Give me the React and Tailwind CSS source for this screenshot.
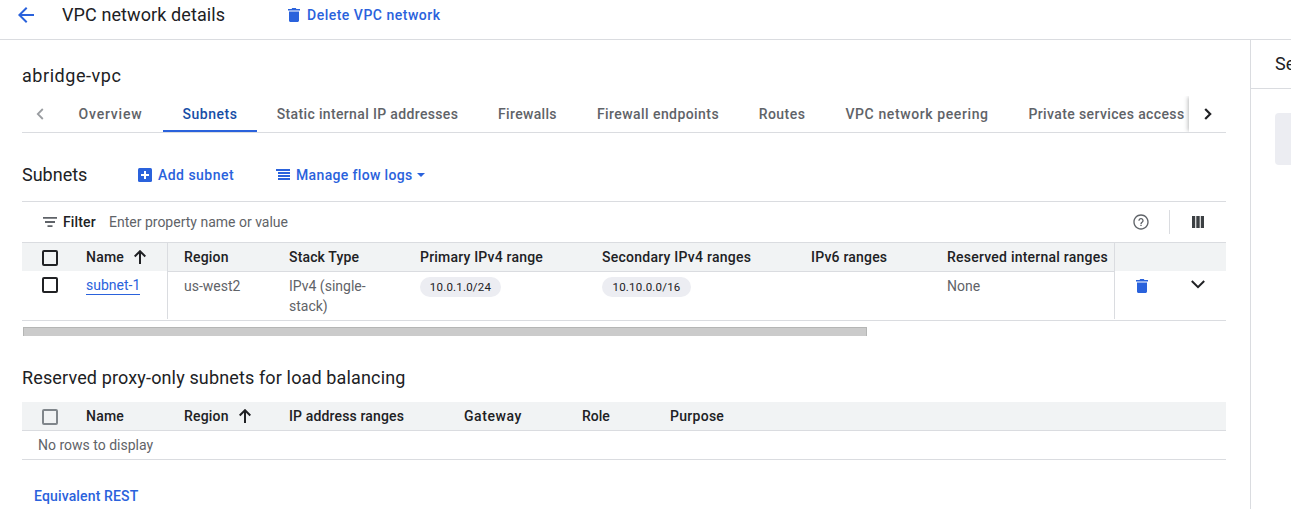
import React from "react";

const GS = "font-['Roboto','Liberation_Sans',sans-serif]";
const BLUE = "text-[#2a62dc]";

function Trash() {
  return (
    <svg width="12" height="14" viewBox="0 0 12 14" fill="currentColor" className="block shrink-0">
      <path d="M0 .9h3.6L4.200 0h3.600l.6.9H12v1.600H0zM1 3.500h10v9c0 .8-.7 1.500-1.500 1.500h-7C1.700 14 1 13.300 1 12.500z" />
    </svg>
  );
}

function ArrowUp() {
  return (
    <svg width="12" height="14" viewBox="0 0 12 14" fill="none" stroke="currentColor" strokeWidth="2" className="block shrink-0">
      <path d="M6 14V1.500M.7 6.500 6 1.200l5.300 5.300" />
    </svg>
  );
}

function Box({ dim, low }) {
  return <span className={"block size-4 rounded-[2px] border-2 " + (dim ? "border-[#80868b] " : "border-[#202124] ") + (low ? "mt-[2px]" : "")} />;
}

function Cell({ w, t = "", children }) {
  return (
    <div className={"shrink-0 whitespace-nowrap " + w}>
      <span className={t}>{children}</span>
    </div>
  );
}

const tabs = [
  ["Overview", "w-[105px]", "tracking-[0.8px]"],
  ["Subnets", "w-[94px]", "tracking-[0.5px]"],
  ["Static internal IP addresses", "w-[221px]", "tracking-[0.35px]"],
  ["Firewalls", "w-[99px]", "tracking-[0.33px]"],
  ["Firewall endpoints", "w-[162px]", "tracking-[0.43px]"],
  ["Routes", "w-[86px]", "tracking-[0.45px]"],
  ["VPC network peering", "w-[184px]", "tracking-[0.6px]"],
  ["Private services access", "w-[195px]", "tracking-[0.38px]"],
];

export default function App() {
  return (
    <div className={"flex h-[509px] w-[1291px] flex-col overflow-hidden bg-white text-[#202124] " + GS}>
      <header className="flex h-10 shrink-0 items-center border-b border-[#dadce0] pb-[9px] pl-[14px]">
        <svg width="24" height="24" viewBox="0 0 24 24" className="text-[#2a62dc]" fill="currentColor">
          <path d="M20 11H7.830l5.590-5.590L12 4l-8 8 8 8 1.410-1.410L7.830 13H20z" />
        </svg>
        <h1 className="ml-6 w-[226px] whitespace-nowrap text-[18px] leading-6 tracking-[0.1px]">VPC network details</h1>
        <button className={"flex items-center gap-[7px] text-sm font-medium " + BLUE}>
          <Trash />
          <span className="whitespace-nowrap tracking-[0.5px]">Delete VPC network</span>
        </button>
      </header>

      <div className="flex min-h-0 flex-1">
        <main className="w-[1250px] shrink-0 pl-[22px] pr-6 pt-6">
          <h2 className="h-6 text-[18px] leading-6 tracking-[0.55px]">abridge-vpc</h2>

          <nav className="mt-2 flex h-[37px] border-b border-[#dadce0] text-sm font-medium text-[#5f6368]">
            <div className="flex w-9 shrink-0 items-center pl-[14px] text-[#9a9da1]">
              <svg width="8" height="12" viewBox="0 0 8 12" fill="none" stroke="currentColor" strokeWidth="1.800">
                <path d="M6.800 1 1.800 6l5 5" />
              </svg>
            </div>
            <div className="flex w-[1131px] shrink-0 overflow-hidden">
              {tabs.map(([name, w, t]) => (
                <div key={name} className={"flex shrink-0 items-center justify-center whitespace-nowrap border-b-2 pt-[2px] " + w + (name === "Subnets" ? " border-[#2a62dc] text-[#174ea6]" : " border-transparent")}>
                  <span className={t}>{name}</span>
                </div>
              ))}
            </div>
            <div className="flex w-[37px] items-center bg-white pl-[15px] text-[#202124] shadow-[-2px_0_4px_-1px_rgba(60,64,67,0.35)] [clip-path:inset(0_0_0_-8px)]">
              <svg width="8" height="12" viewBox="0 0 8 12" fill="none" stroke="currentColor" strokeWidth="2.200">
                <path d="M1.200 1l5 5-5 5" />
              </svg>
            </div>
          </nav>

          <div className="flex h-[68px] items-center pt-4">
            <h2 className="w-[116px] text-[18px] leading-6">Subnets</h2>
            <button className={"flex w-[138px] items-center gap-[6px] text-sm font-medium " + BLUE}>
              <svg width="14" height="14" viewBox="0 0 14 14">
                <rect width="14" height="14" rx="1.500" fill="currentColor" />
                <path d="M7 3v8M3 7h8" stroke="#fff" strokeWidth="2" />
              </svg>
              <span className="whitespace-nowrap tracking-[0.47px]">Add subnet</span>
            </button>
            <button className={"flex items-center text-sm font-medium " + BLUE}>
              <svg width="14" height="12" viewBox="0 0 14 12" fill="currentColor">
                <path d="M0 0h14v2H0zM2 3h12v2H2zM2 6h12v2H2zM2 9h12v2H2z" />
              </svg>
              <span className="ml-[6px] whitespace-nowrap tracking-[0.35px]">Manage flow logs</span>
              <svg width="8" height="4" viewBox="0 0 8 4" fill="currentColor" className="ml-1">
                <path d="M0 0h8L4 4z" />
              </svg>
            </button>
          </div>

          <section className="w-[1204px] border-t border-[#dadce0]">
            <div className="flex h-10 items-center pl-[21px]">
              <svg width="14" height="10" viewBox="0 0 14 10" fill="#5f6368">
                <path d="M0 0h14v1.800H0zM2 4.100h10v1.800H2zM4.500 8.200h5V10h-5z" />
              </svg>
              <span className="ml-[6px] w-[46px] whitespace-nowrap text-sm font-medium tracking-[0.15px]">Filter</span>
              <span className="whitespace-nowrap text-sm text-[#5f6368]">Enter property name or value</span>
              <div className="ml-auto flex items-center">
                <svg width="16" height="16" viewBox="0 0 24 24" fill="#5f6368">
                  <path d="M11 18h2v-2h-2zm1-17.500C5.650.5.5 5.650.5 12S5.650 23.500 12 23.500 23.500 18.350 23.500 12 18.350.5 12 .5zm0 21c-5.240 0-9.500-4.260-9.500-9.500S6.760 2.500 12 2.500s9.500 4.260 9.500 9.500-4.260 9.500-9.500 9.500zM12 6c-2.210 0-4 1.790-4 4h2c0-1.100.9-2 2-2s2 .9 2 2c0 2-3 1.750-3 5h2c0-2.250 3-2.500 3-5 0-2.210-1.790-4-4-4z" />
                </svg>
                <span className="ml-5 h-6 w-px bg-[#dadce0]" />
                <svg width="12" height="12" viewBox="0 0 12 12" fill="#3c4043" className="ml-[22px] mr-[22px]">
                  <path d="M0 0h3.200v12H0zM4.300 0h3.400v12H4.300zM8.800 0H12v12H8.800z" />
                </svg>
              </div>
            </div>

            <div className="flex h-[79px] border-y border-[#dadce0]">
              <div className="mb-px w-[146px] shrink-0 border-r border-[#dadce0]">
                <div className="flex h-7 items-center bg-[#f1f3f4] pl-5 text-sm font-medium tracking-[0.2px]">
                  <Box low />
                  <span className="ml-7 mr-[10px]">Name</span>
                  <ArrowUp />
                </div>
                <div className="flex h-7 items-center pl-5">
                  <Box />
                  <span className={"ml-7 whitespace-nowrap border-b border-[#2a62dc] text-[14px] leading-[18px] " + BLUE}>subnet-1</span>
                </div>
              </div>
              <div className="w-[946px] shrink-0">
                <div className="flex h-[29px] items-center border-b border-[#dadce0] bg-[#f1f3f4] pl-4 text-sm font-medium tracking-[0.2px]">
                  <Cell w="w-[105px]">Region</Cell>
                  <Cell w="w-[131px]" t="tracking-[0.15px]">Stack Type</Cell>
                  <Cell w="w-[182px]">Primary IPv4 range</Cell>
                  <Cell w="w-[209px]" t="tracking-[0.25px]">Secondary IPv4 ranges</Cell>
                  <Cell w="w-[136px]">IPv6 ranges</Cell>
                  <Cell w="w-[160px]" t="tracking-[0.23px]">Reserved internal ranges</Cell>
                </div>
                <div className="flex pl-4 pt-1 text-sm text-[#5f6368]">
                  <Cell w="w-[105px]">us-west2</Cell>
                  <Cell w="w-[131px]">IPv4 (single-<br />stack)</Cell>
                  <div className="w-[182px] shrink-0 pt-px">
                    <span className="flex h-5 w-[81px] items-center justify-center rounded-full bg-[#ecedf2] text-[11.5px] leading-5 tracking-[0.2px] text-[#202124]">10.0.1.0/24</span>
                  </div>
                  <div className="w-[345px] shrink-0 pt-px">
                    <span className="flex h-5 w-[89px] items-center justify-center rounded-full bg-[#ecedf2] text-[11.5px] leading-5 tracking-[0.2px] text-[#202124]">10.10.0.0/16</span>
                  </div>
                  <Cell w="w-[150px]">None</Cell>
                </div>
              </div>
              <div className="mb-px w-[112px] shrink-0 border-l border-[#dadce0]">
                <div className="h-7 bg-[#f1f3f4]" />
                <div className="flex pl-[21px] pt-2">
                  <span className={BLUE}><Trash /></span>
                  <svg width="14" height="9" viewBox="0 0 14 9" fill="none" stroke="currentColor" strokeWidth="2" className="ml-[43px] mt-px">
                    <path d="M.8 1 7 7.200 13.200 1" />
                  </svg>
                </div>
              </div>
            </div>
            <div className="ml-px mt-[6px] h-[9px] w-[844px] border-l border-r border-t border-[#b5b6b5] bg-[#cbcbcb]" />
          </section>

          <h2 className="mt-[30px] h-6 whitespace-nowrap text-[18px] leading-6 tracking-[0.14px]">Reserved proxy-only subnets for load balancing</h2>
          <section className="mt-3 w-[1204px]">
            <div className="flex h-[29px] items-center border-b border-[#dadce0] bg-[#f1f3f4] pl-5 text-sm font-medium tracking-[0.2px]">
              <Box dim low />
              <Cell w="ml-7 w-[98px]">Name</Cell>
              <div className="flex w-[105px] items-center gap-[10px]">
                <span>Region</span>
                <ArrowUp />
              </div>
              <Cell w="w-[175px]" t="tracking-[0.14px]">IP address ranges</Cell>
              <Cell w="w-[118px]" t="tracking-[0.55px]">Gateway</Cell>
              <Cell w="w-[88px]" t="tracking-normal">Role</Cell>
              <Cell w="w-[100px]" t="tracking-[0.28px]">Purpose</Cell>
            </div>
            <div className="flex h-[29px] items-center border-b border-[#dadce0] pl-4 text-sm text-[#5f6368]">No rows to display</div>
          </section>
          <button className={"mt-6 block h-6 pl-3 text-sm font-medium leading-6 tracking-[0.15px] " + BLUE}>Equivalent REST</button>
        </main>

        <aside className="w-[41px] shrink-0 overflow-hidden border-l border-[#dadce0]">
          <div className="flex h-[49px] items-center border-b border-[#dadce0] pb-[2px] pl-6 text-[18px]">
            <span className="whitespace-nowrap">Se</span>
          </div>
          <div className="ml-6 mt-6 h-[52px] w-40 rounded bg-[#ecedf2]" />
        </aside>
      </div>
    </div>
  );
}
